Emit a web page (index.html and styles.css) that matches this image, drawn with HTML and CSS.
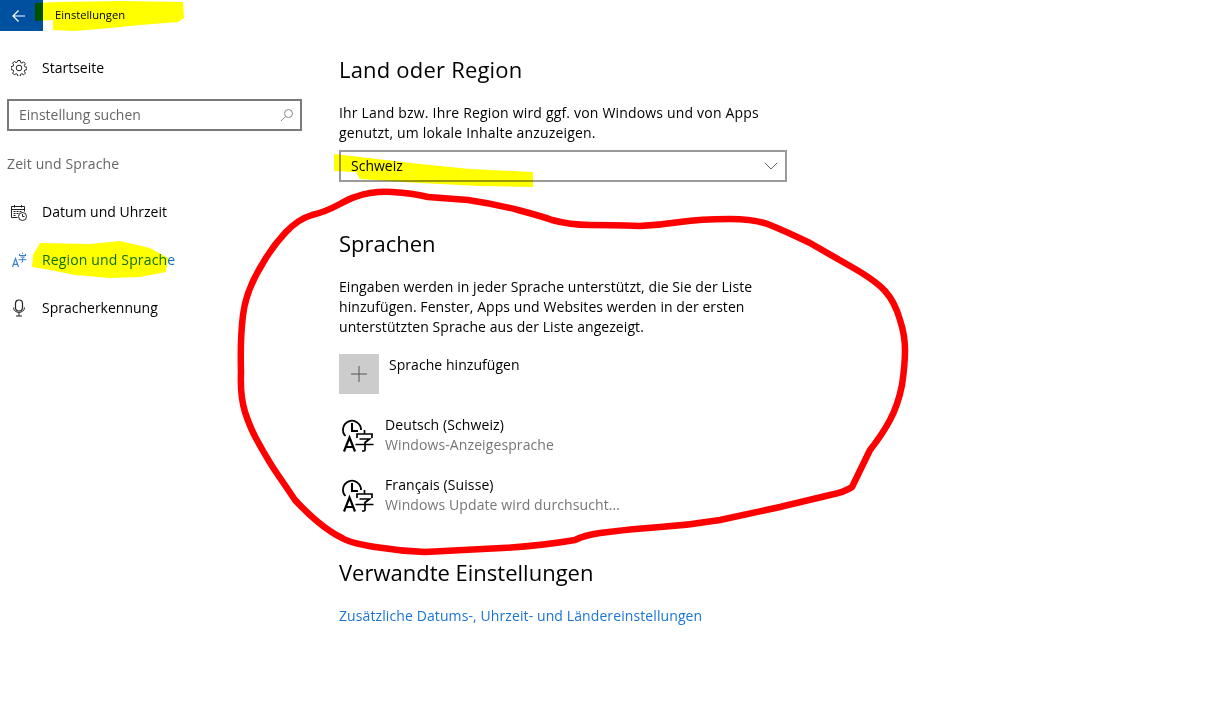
FILE: index.html
```html
<!DOCTYPE html>
<html lang="de">
<head>
<meta charset="utf-8">
<title>Einstellungen</title>
<link rel="stylesheet" href="styles.css">
</head>
<body>
<header class="titlebar">
  <div class="back">
    <svg width="14" height="14" viewBox="0 0 14 14"><path d="M1 7H13M6.500 1.500L1 7l5.500 5.500" fill="none" stroke="#fff" stroke-width="1.200"/></svg>
  </div>
  <div class="apptitle">Einstellungen</div>
</header>
<div class="layout">
  <nav class="sidebar">
    <div class="navitem home">
      <svg class="navicon" width="16" height="16" viewBox="0 0 16 16"><path d="M6.800 .5h2.400l.4 2 1.300.6 1.800-1.100 1.700 1.700-1.100 1.800.6 1.300 2 .4v2.400l-2 .4-.6 1.300 1.100 1.800-1.700 1.700-1.800-1.100-1.300.6-.4 2H6.800l-.4-2-1.300-.6-1.800 1.100-1.700-1.700 1.100-1.800-.6-1.300-2-.4V6.600l2-.4.600-1.300-1.100-1.800 1.700-1.700 1.800 1.100 1.300-.6z" fill="none" stroke="#222"/><circle cx="8" cy="8" r="2.800" fill="none" stroke="#222"/></svg>
      <span>Startseite</span>
    </div>
    <div class="search">
      <span>Einstellung suchen</span>
      <svg width="14" height="14" viewBox="0 0 14 14"><circle cx="8.500" cy="5.500" r="4" fill="none" stroke="#888"/><path d="M5.600 8.400L1 13" stroke="#888" fill="none"/></svg>
    </div>
    <div class="group">Zeit und Sprache</div>
    <div class="navitem">
      <svg class="navicon" width="16" height="17" viewBox="0 0 16 17"><path d="M6.500 13.500H.5V2.500h13v5M.5 5.500h13M3.500 1v2.500M10.500 1v2.500" fill="none" stroke="#222"/><path d="M2.500 7.500h2M5.500 7.500h2M8.500 7.500h2M2.500 9.500h2M5.500 9.500h2M2.500 11.500h2" stroke="#222" stroke-width="1.200" fill="none"/><circle cx="11.500" cy="12.500" r="4" fill="#fff" stroke="#222"/><path d="M11.500 10v2.500h2" fill="none" stroke="#222"/></svg>
      <span>Datum und Uhrzeit</span>
    </div>
    <div class="navitem active">
      <svg class="navicon" width="16" height="16" viewBox="0 0 16 16"><path d="M1.500 15L4.500 6.500 7.500 15M2.500 12.300h4" fill="none" stroke="#3a7fd0" stroke-width="1.200"/><path d="M8 3.500h7M8.500 1.800v1.700M14.500 1.800v1.700M11.500.5v1.300M9.500 5h4l-2 1.500v3.500l-1 .5M7.500 7.700h8" fill="none" stroke="#3a7fd0" stroke-width="1"/></svg>
      <span>Region und Sprache</span>
    </div>
    <div class="navitem">
      <svg class="navicon" width="16" height="18" viewBox="0 0 16 18"><rect x="4.500" y="1" width="7" height="11" rx="3.500" fill="none" stroke="#222" stroke-width="1.200"/><path d="M2.500 8.500c0 6.500 11 6.500 11 0M8 13.500V17M5 17h6" fill="none" stroke="#222"/></svg>
      <span>Spracherkennung</span>
    </div>
  </nav>
  <main class="content">
    <h2 class="heading first">Land oder Region</h2>
    <p class="para country">Ihr Land bzw. Ihre Region wird ggf. von Windows und von Apps<br>genutzt, um lokale Inhalte anzuzeigen.</p>
    <div class="select">
      <span>Schweiz</span>
      <svg width="14" height="8" viewBox="0 0 14 8"><path d="M.7 .7L7 7l6.300-6.300" fill="none" stroke="#666"/></svg>
    </div>
    <h2 class="heading lang">Sprachen</h2>
    <p class="para">Eingaben werden in jeder Sprache unterstützt, die Sie der Liste<br>hinzufügen. Fenster, Apps und Websites werden in der ersten<br>unterstützten Sprache aus der Liste angezeigt.</p>
    <div class="add">
      <div class="addbox"><svg width="16" height="16" viewBox="0 0 16 16"><path d="M8 0v16M0 8h16" stroke="#555" fill="none"/></svg></div>
      <span class="addlabel">Sprache hinzufügen</span>
    </div>
    <div class="langitem">
      <svg class="langicon" width="34" height="36" viewBox="0 0 34 36"><path d="M4.500 19A9 9 0 1 1 20 13" fill="none" stroke="#000" stroke-width="1.800"/><path d="M11 6V14H17" fill="none" stroke="#000" stroke-width="2"/><path d="M3 34.500L8.500 20.500l5.500 14M5 30h7" fill="none" stroke="#000" stroke-width="2.200"/><path d="M23.500 13v4M16 21v-4h15v4M18.500 22h10l-4.500 3.500v7.500q0 1-3 1M14.500 27.500h18" fill="none" stroke="#000" stroke-width="1.700"/></svg>
      <div class="langtext"><div class="langname">Deutsch (Schweiz)</div><div class="sub">Windows-Anzeigesprache</div></div>
    </div>
    <div class="langitem">
      <svg class="langicon" width="34" height="36" viewBox="0 0 34 36"><path d="M4.500 19A9 9 0 1 1 20 13" fill="none" stroke="#000" stroke-width="1.800"/><path d="M11 6V14H17" fill="none" stroke="#000" stroke-width="2"/><path d="M3 34.500L8.500 20.500l5.500 14M5 30h7" fill="none" stroke="#000" stroke-width="2.200"/><path d="M23.500 13v4M16 21v-4h15v4M18.500 22h10l-4.500 3.500v7.500q0 1-3 1M14.500 27.500h18" fill="none" stroke="#000" stroke-width="1.700"/></svg>
      <div class="langtext"><div class="langname">Français (Suisse)</div><div class="sub">Windows Update wird durchsucht...</div></div>
    </div>
    <h2 class="heading related">Verwandte Einstellungen</h2>
    <a class="link" href="#">Zusätzliche Datums-, Uhrzeit- und Ländereinstellungen</a>
  </main>
</div>
<svg class="marks yellow" width="1213" height="719" viewBox="0 0 1213 719">
  <path d="M35 3L60 2L120 1L183 2L184 18L178 22L140 25L110 28L75 31L53 30L53 20L35 21Z"/>
  <path d="M40 243L90 244L120 241L150 248L168 258L166 272L140 277L110 278L75 275L50 270L32 267L33 255Z"/>
  <path d="M334 154L360 157L420 164L470 169L533 172L533 187L480 186L420 183L360 179L356 172L334 171Z"/>
</svg>
<svg class="marks" width="1213" height="719" viewBox="0 0 1213 719">
  <path class="redline" d="M428 197L468 200Q495 204 518 210T552 220Q570 225 590 225T640 226Q660 225 680 222T730 219Q755 219 770 225T810 243L850 266Q875 280 885 291T900 320Q905 335 905 350T902 385Q898 405 890 420T870 450L852 487Q845 492 830 495L780 507L720 520Q690 525 660 527T600 533Q585 535 575 540Q540 546 502 548T425 552Q400 551 375 547T342 538Q330 532 318 522T295 500Q287 488 278 475T258 442Q250 428 245 412T241 372Q240 340 243 315T263 263Q272 247 285 233T312 215Q325 212 338 205T355 197Q372 191 392 192T428 197Z"/>
</svg>
</body>
</html>
```

FILE: styles.css
```css
* { box-sizing: border-box; }
html, body { margin: 0; height: 100%; }
body {
  position: relative;
  width: 1213px;
  height: 719px;
  overflow: hidden;
  background: #fff;
  color: #000;
  font-family: "Open Sans", "Noto Sans", sans-serif;
  font-size: 14px;
  line-height: 20px;
}
.titlebar { display: flex; height: 31px; }
.back {
  width: 43px;
  height: 31px;
  background: #0050a0;
  display: flex;
  align-items: center;
  justify-content: center;
  padding-right: 6px;
}
.apptitle { margin-left: 12px; font-size: 11.200px; line-height: 30px; }
.layout { display: flex; }
.sidebar { width: 339px; padding: 0 0 0 7px; flex: none; }
.navitem {
  display: flex;
  align-items: center;
  height: 20px;
  margin-bottom: 28px;
  padding-left: 4px;
  gap: 15px;
}
.navitem.home { margin-top: 27px; margin-bottom: 21px; }
.navicon { flex: none; }
.active { color: #0b6fc4; letter-spacing: .15px; }
.search {
  width: 295px;
  height: 32px;
  border: 2px solid #7a7a7a;
  display: flex;
  align-items: center;
  justify-content: space-between;
  padding: 0 6px 0 10px;
  color: #666;
}
.group { color: #666; margin: 23px 0 28px; letter-spacing: .12px; }
.content { padding-top: 23px; width: 470px; }
.heading { margin: 0; font-size: 22px; font-weight: 400; line-height: 30px; }
.first { letter-spacing: .2px; }
.para { margin: 0; letter-spacing: .07px; }
.country { margin-top: 19px; letter-spacing: .18px; }
.select {
  margin-top: 7px;
  width: 448px;
  height: 32px;
  border: 2px solid #999;
  display: flex;
  align-items: center;
  justify-content: space-between;
  padding: 0 7px 0 10px;
}
.lang { margin-top: 46px; margin-bottom: 19px; }
.add { display: flex; align-items: flex-start; gap: 10px; margin-top: 17px; }
.addlabel { padding-top: 1px; letter-spacing: .05px; }
.addbox {
  width: 40px;
  height: 40px;
  background: #ccc;
  display: flex;
  align-items: center;
  justify-content: center;
}
.langitem { display: flex; height: 40px; margin-top: 20px; align-items: center; gap: 10px; }
.add + .langitem { margin-top: 21px; }
.langicon { flex: none; margin-left: 2px; }
.langname { letter-spacing: .1px; }
.sub { color: #767676; letter-spacing: .1px; }
.related { margin-top: 42px; }
.link { display: block; margin-top: 19px; color: #1a74d2; text-decoration: none; letter-spacing: .1px; }
.marks { position: absolute; left: 0; top: 0; pointer-events: none; }
.yellow { fill: #ffff00; mix-blend-mode: multiply; }
.redline { fill: none; stroke: #ff0000; stroke-width: 6.500; stroke-linejoin: round; }
```
